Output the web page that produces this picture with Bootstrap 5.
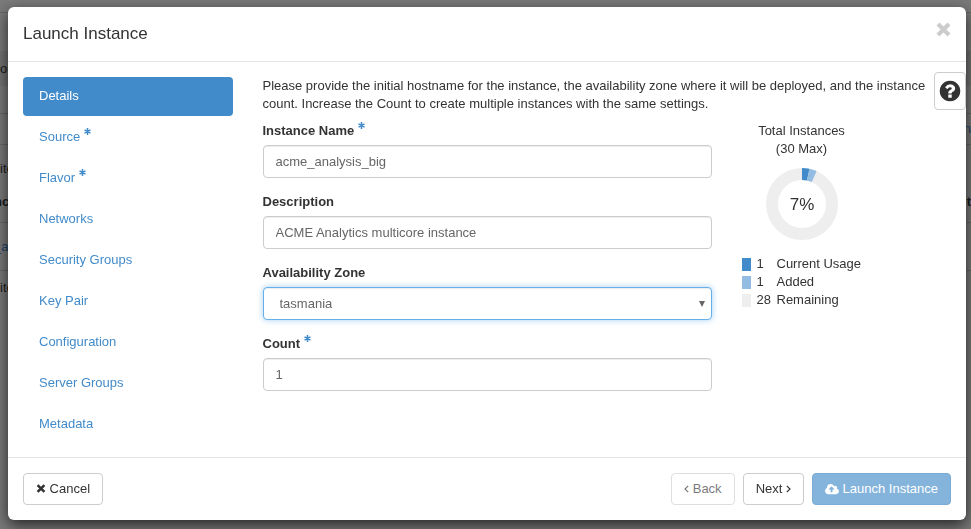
<!DOCTYPE html>
<html lang="en">
<head>
<meta charset="utf-8">
<meta name="viewport" content="width=device-width, initial-scale=1">
<title>Launch Instance</title>
<link href="https://cdn.jsdelivr.net/npm/bootstrap@5.3.0/dist/css/bootstrap.min.css" rel="stylesheet">
<style>
  :root { --brand: #428bca; }
  body { font: 13px/18px "Liberation Sans", Arial, sans-serif; color: #333; background: #7a7a7a; }
  svg { fill: currentColor; }
  .line-icon { fill: none; stroke: currentColor; }

  /* Dimmed page behind the dialog */
  .under-page { color: #1a1a1a; overflow: hidden; }
  .under-row { border-bottom: 1px solid #666; }
  .under-top { height: 13px; }
  .under-gap { height: 38px; }
  .under-band { height: 35px; background: #737373; }
  .under-mid { height: 28px; border-bottom: 1px solid #666; }
  .under-tab { height: 31px; }
  .under-item { height: 48px; }
  .under-head { height: 30px; }
  .under-link { color: #21466a; }
  .under-cut { margin-left: -6px; }

  .launch-dialog { max-width: none; margin: 7px 5px 9px 8px; }
  .launch-content { border: 0; border-radius: 6px; box-shadow: 0 5px 15px rgba(0,0,0,.7); color: #333; }
  .launch-head { padding: 15px; height: 55px; border-color: #e5e5e5; }
  .launch-head h1 { font-size: 17px; line-height: 24px; font-weight: 400; }
  .close-btn { color: #ccc; line-height: 1; }
  .launch-body { padding: 15px 15px 13px; }
  .launch-foot { padding: 15px; border-color: #e5e5e5; gap: 8px; }
  .wide-row { --bs-gutter-x: 30px; }

  .step-nav { gap: 2px; }
  .step-nav .nav-link { color: var(--brand); padding: 10px 16px 11px; border-radius: 4px; }
  .step-nav .nav-link.active { background: var(--brand); color: #fff; }
  .req { width: 7px; height: 7px; color: var(--brand); vertical-align: 6px; }

  .intro { margin-bottom: 9px; }
  .field { margin-bottom: 15px; }
  .field label { display: block; font-weight: 700; margin-bottom: 5px; }
  .field .form-control, .field .form-select {
    height: 33px; padding: 6px 12px; font-size: 13px; line-height: 18px; color: #666;
    border: 1px solid #ccc; border-radius: 4px; box-shadow: inset 0 1px 1px rgba(0,0,0,.075);
  }
  .field .form-select {
    padding-left: 16px; border-color: #66afe9;
    box-shadow: inset 0 1px 1px rgba(0,0,0,.075), 0 0 6px rgba(102,175,233,.6);
    background-image: url("data:image/svg+xml,%3csvg xmlns='http://www.w3.org/2000/svg' viewBox='0 0 6 6'%3e%3cpath fill='%23666' d='M0 0h6L3 6z'/%3e%3c/svg%3e");
    background-size: 6px 6px; background-position: right 6px center;
  }

  .quota { width: 120px; }
  .donut { width: 72px; height: 72px; margin: 10px auto 15px; }
  .donut text { font-size: 17px; fill: #333; }
  .swatch { width: 9px; height: 13px; margin-right: 6px; }
  .amount { width: 20px; }
  .c-used { fill: #428bca; background: #428bca; }
  .c-added { fill: #92bce1; background: #92bce1; }
  .c-left { fill: #eee; background: #eee; }

  .act { --bs-btn-font-size: 13px; --bs-btn-padding-y: 6px; --bs-btn-padding-x: 12px; --bs-btn-border-radius: 4px;
    --bs-btn-color: #333; --bs-btn-bg: #fff; --bs-btn-border-color: #ccc; --bs-btn-disabled-color: #333;
    --bs-btn-disabled-bg: #fff; --bs-btn-disabled-border-color: #ccc; line-height: 18px; }
  .act .line-icon { vertical-align: 0; }
  .act-main { --bs-btn-disabled-color: #fff; --bs-btn-disabled-bg: #428bca; --bs-btn-disabled-border-color: #357ebd; }
  .help-btn { top: 65px; right: 0; width: 32px; height: 38px; --bs-btn-padding-x: 0; }
</style>
</head>
<body>
<div class="under-page" aria-hidden="true">
  <div class="under-row under-top"></div>
  <div class="under-gap"></div>
  <div class="under-band d-flex align-items-center"><span>or</span></div>
  <div class="under-mid"></div>
  <div class="under-row under-tab d-flex align-items-center justify-content-end"><span class="under-link">n</span></div>
  <div class="under-item d-flex align-items-center"><span>ite</span></div>
  <div class="under-row under-head d-flex justify-content-between fw-bold"><span class="under-cut">nc</span><span>t</span></div>
  <div class="under-row under-item d-flex align-items-center"><span class="under-link under-cut">_a</span></div>
  <div class="d-flex pt-2"><span>ite</span></div>
</div>

<div class="modal show d-block" tabindex="-1" role="dialog" aria-labelledby="dialogTitle">
  <div class="modal-dialog launch-dialog">
    <div class="modal-content launch-content">
      <div class="modal-header launch-head align-items-start">
        <h1 class="modal-title" id="dialogTitle">Launch Instance</h1>
        <button type="button" class="close-btn btn p-0 border-0" aria-label="Close">
          <svg class="line-icon d-block" width="15" height="15" viewBox="0 0 15 15" stroke-width="4.2"><path d="M2 2l11 11M13 2L2 13"/></svg>
        </button>
      </div>

      <button type="button" class="btn act help-btn position-absolute d-flex align-items-center justify-content-center" aria-label="Help">
        <svg width="24" height="24" viewBox="0 0 1792 1792"><path d="M1024 1376v-192q0-14-9-23t-23-9h-192q-14 0-23 9t-9 23v192q0 14 9 23t23 9h192q14 0 23-9t9-23zm256-672q0-88-55.500-163t-138.500-116-170-41q-243 0-371 213-15 24 8 42l132 100q7 6 19 6 16 0 25-12 53-68 86-92 34-24 86-24 48 0 85.500 26t37.500 59q0 38-20 61t-68 45q-63 28-115.500 86.500t-52.500 125.500v36q0 14 9 23t23 9h192q14 0 23-9t9-23q0-19 21.500-49.500t54.500-49.500q32-18 49-28.500t46-35 44.500-48 28-60.500 12.500-81zm384 192q0 209-103 385.500t-279.500 279.500-385.500 103-385.500-103-279.500-279.500-103-385.500 103-385.500 279.500-279.500 385.500-103 385.500 103 279.500 279.500 103 385.500z"/></svg>
      </button>

      <div class="modal-body launch-body">
        <svg class="d-none"><symbol id="star" viewBox="0 0 7 7"><path d="M3.500 0v7M.5 1.800l6 3.400M6.500 1.800l-6 3.400" fill="none" stroke="currentColor" stroke-width="1.500"/></symbol></svg>
        <div class="row wide-row">
          <div class="col-3">
            <nav class="nav nav-pills flex-column step-nav" aria-label="Steps">
              <a class="nav-link active" href="#" aria-current="step">Details</a>
              <a class="nav-link" href="#">Source <svg class="req"><use href="#star"/></svg></a>
              <a class="nav-link" href="#">Flavor <svg class="req"><use href="#star"/></svg></a>
              <a class="nav-link" href="#">Networks</a>
              <a class="nav-link" href="#">Security Groups</a>
              <a class="nav-link" href="#">Key Pair</a>
              <a class="nav-link" href="#">Configuration</a>
              <a class="nav-link" href="#">Server Groups</a>
              <a class="nav-link" href="#">Metadata</a>
            </nav>
          </div>
          <div class="col-9">
            <p class="intro">Please provide the initial hostname for the instance, the availability zone where it will be deployed, and the instance count. Increase the Count to create multiple instances with the same settings.</p>
            <div class="row wide-row">
              <form class="col-8">
                <div class="field">
                  <label for="name">Instance Name <svg class="req"><use href="#star"/></svg></label>
                  <input class="form-control" id="name" type="text" value="acme_analysis_big">
                </div>
                <div class="field">
                  <label for="desc">Description</label>
                  <input class="form-control" id="desc" type="text" value="ACME Analytics multicore instance">
                </div>
                <div class="field">
                  <label for="zone">Availability Zone</label>
                  <select class="form-select" id="zone"><option>tasmania</option></select>
                </div>
                <div class="field mb-0">
                  <label for="count">Count <svg class="req"><use href="#star"/></svg></label>
                  <input class="form-control" id="count" type="text" inputmode="numeric" value="1">
                </div>
              </form>
              <div class="col-4">
                <div class="quota">
                  <div class="text-center">Total Instances<br>(30 Max)</div>
                  <svg class="donut d-block" viewBox="-36 -36 72 72" role="img" aria-label="7% of instances used">
                    <circle r="30" fill="none" stroke="#eee" stroke-width="12"/>
                    <path class="c-used" d="M0-36A36 36 0 0 1 7.480-35.210L4.990-23.480A24 24 0 0 0 0-24z"/>
                    <path class="c-added" d="M7.480-35.210A36 36 0 0 1 14.640-32.890L9.760-21.930A24 24 0 0 0 4.990-23.480z"/>
                    <text text-anchor="middle" y="6">7%</text>
                  </svg>
                  <div class="d-flex align-items-center"><span class="swatch c-used"></span><span class="amount">1</span><span>Current Usage</span></div>
                  <div class="d-flex align-items-center"><span class="swatch c-added"></span><span class="amount">1</span><span>Added</span></div>
                  <div class="d-flex align-items-center"><span class="swatch c-left"></span><span class="amount">28</span><span>Remaining</span></div>
                </div>
              </div>
            </div>
          </div>
        </div>
      </div>

      <div class="modal-footer launch-foot">
        <button type="button" class="btn act m-0 me-auto"><svg class="line-icon" width="10" height="9" viewBox="0 0 10 10" stroke-width="2.800"><path d="M1.200 1.200l7.600 7.600M8.800 1.200L1.200 8.800"/></svg> Cancel</button>
        <button type="button" class="btn act m-0" disabled><svg class="line-icon" width="5" height="8" viewBox="0 0 5 8" stroke-width="1.200"><path d="M4.200.8L1 4l3.200 3.200"/></svg> Back</button>
        <button type="button" class="btn act m-0">Next <svg class="line-icon" width="5" height="8" viewBox="0 0 5 8" stroke-width="1.200"><path d="M.8.8L4 4 .8 7.200"/></svg></button>
        <button type="button" class="btn act act-main m-0" disabled><svg width="14" height="13" viewBox="-64 0 1920 1792"><path d="M1216 864q0-14-9-23l-352-352q-9-9-23-9t-23 9l-351 351q-10 12-10 24 0 14 9 23t23 9h224v352q0 13 9.500 22.500t22.500 9.500h192q13 0 22.500-9.500t9.500-22.500v-352h224q13 0 22.500-9.500t9.500-22.500zm640 288q0 159-112.500 271.500t-271.500 112.500h-1088q-185 0-316.500-131.500t-131.500-316.500q0-130 70-240t188-165q-2-30-2-43 0-212 150-362t362-150q156 0 285.500 87t188.500 231q71-62 166-62 106 0 181 75t75 181q0 76-41 138 130 31 213.500 135.500t83.500 238.500z"/></svg> Launch Instance</button>
      </div>
    </div>
  </div>
</div>
<script src="https://cdn.jsdelivr.net/npm/bootstrap@5.3.0/dist/js/bootstrap.bundle.min.js"></script>
</body>
</html>
